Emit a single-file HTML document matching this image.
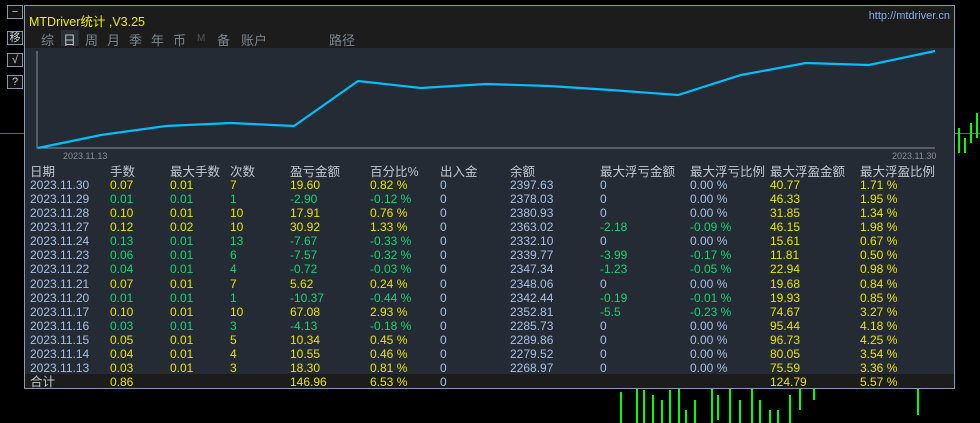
<!DOCTYPE html>
<html><head><meta charset="utf-8"><style>
*{margin:0;padding:0;box-sizing:border-box}
body{width:980px;height:423px;background:#000;position:relative;overflow:hidden;font-family:"Liberation Sans","Noto Sans CJK SC",sans-serif;font-size:12px}
.a{position:absolute;white-space:nowrap}
.btn{position:absolute;left:7px;width:16px;height:14px;border:1px solid #8a9aaa;color:#c8d0d8;font-size:11px;line-height:12px;text-align:center;background:#111}
#panel{position:absolute;left:24px;top:5px;width:931px;height:384px;background:#252b34;border:1px solid #8a9ab0}
#hdr{position:absolute;left:0;top:0;width:929px;height:42px;background:#1c1c1c}
.t{position:absolute;color:#7c858e;font-size:13px;top:24px}
.row{position:absolute;left:0;width:929px;height:14px;line-height:14px}
.row span{position:absolute;top:0}
.y{color:#e6e600}.g{color:#18d470}.d{color:#a8c0e6}.z{color:#a8c0e6}.h{color:#c2c8d0;font-size:12.5px}
</style></head><body>
<div class="btn" style="top:5px">−</div>
<div class="btn" style="top:31px">移</div>
<div class="btn" style="top:53px">√</div>
<div class="btn" style="top:75px">?</div>
<div class="a" style="left:0;top:133px;width:24px;height:1px;background:#667"></div>
<div class="a" style="left:955px;top:133px;width:25px;height:1px;background:#667"></div>
<svg class="a" style="left:600px;top:385px" width="380" height="38">
<g stroke="#00ff00" fill="none" stroke-width="2">
<path d="M21 7V38M37 0V38M44 5V38M53 10V38M62 15V38M70 5V38M79 0V38M86 25V38M95 15V38M112 0V38M118 10V35M130 0V38M140 15V38M152 0V38M160 15V38M170 25V38M178 25V38M190 10V38M200 0V25M214 0V15M318 0V30"/>
</g></svg>
<svg class="a" style="left:955px;top:108px" width="25" height="45"><g stroke="#00ff00" fill="none" stroke-width="2"><path d="M4 20V45M10 30V45M16 15V35M22 5V30"/></g></svg>
<div id="panel">
<div id="hdr"></div>
<div class="a" style="left:4px;top:5px;color:#f0f000;font-size:12.5px">MTDriver统计 ,V3.25</div>
<div class="a" style="right:4px;top:4px;color:#88b0e8;font-size:11px">http://mtdriver.cn</div>
<div class="a" style="left:36px;top:24px;width:18px;height:16px;background:#2a3038"></div>
<span class="t" style="left:16px">综</span><span class="t" style="left:38px;color:#b8c0c8">日</span><span class="t" style="left:60px">周</span><span class="t" style="left:82px">月</span><span class="t" style="left:104px">季</span><span class="t" style="left:126px">年</span><span class="t" style="left:148px">币</span><span class="t" style="left:172px;font-size:10px;top:27px;color:#555">M</span><span class="t" style="left:192px">备</span><span class="t" style="left:216px">账户</span><span class="t" style="left:304px">路径</span>
<svg class="a" style="left:0;top:42px" width="929" height="115">
<path d="M12 3V100H910" stroke="#8a9098" fill="none"/>
<path d="M13 100L76 87L141 78L206 75L269 78L333 33L396 40L461 36L524 38L586 42L653 47L716 27L781 15L844 17L910 3" stroke="#00bfff" stroke-width="2.2" fill="none"/>
</svg>
<div class="a" style="left:38px;top:145px;color:#8a9098;font-size:9px">2023.11.13</div>
<div class="a" style="left:867px;top:145px;color:#8a9098;font-size:9px">2023.11.30</div>
<div class="row" style="top:159px"><span class="h" style="left:5px">日期</span><span class="h" style="left:85px">手数</span><span class="h" style="left:145px">最大手数</span><span class="h" style="left:205px">次数</span><span class="h" style="left:265px">盈亏金额</span><span class="h" style="left:345px">百分比%</span><span class="h" style="left:415px">出入金</span><span class="h" style="left:485px">余额</span><span class="h" style="left:575px">最大浮亏金额</span><span class="h" style="left:665px">最大浮亏比例</span><span class="h" style="left:745px">最大浮盈金额</span><span class="h" style="left:835px">最大浮盈比例</span></div>
<div id="rows"></div>
<div class="a" style="left:0;top:368px;width:929px;height:14px;background:#1c1c1c"></div>
<div class="row" style="top:369px"><span class="h" style="left:5px">合计</span><span class="y" style="left:85px">0.86</span><span class="y" style="left:265px">146.96</span><span class="y" style="left:345px">6.53 %</span><span class="z" style="left:415px">0</span><span class="y" style="left:745px">124.79</span><span class="y" style="left:835px">5.57 %</span></div>
</div>
<script>
var d=[["30","0.07","0.01","7","19.60","0.82 %","2397.63","0","0.00 %","40.77","1.71 %"],
["29","0.01","0.01","1","-2.90","-0.12 %","2378.03","0","0.00 %","46.33","1.95 %"],
["28","0.10","0.01","10","17.91","0.76 %","2380.93","0","0.00 %","31.85","1.34 %"],
["27","0.12","0.02","10","30.92","1.33 %","2363.02","-2.18","-0.09 %","46.15","1.98 %"],
["24","0.13","0.01","13","-7.67","-0.33 %","2332.10","0","0.00 %","15.61","0.67 %"],
["23","0.06","0.01","6","-7.57","-0.32 %","2339.77","-3.99","-0.17 %","11.81","0.50 %"],
["22","0.04","0.01","4","-0.72","-0.03 %","2347.34","-1.23","-0.05 %","22.94","0.98 %"],
["21","0.07","0.01","7","5.62","0.24 %","2348.06","0","0.00 %","19.68","0.84 %"],
["20","0.01","0.01","1","-10.37","-0.44 %","2342.44","-0.19","-0.01 %","19.93","0.85 %"],
["17","0.10","0.01","10","67.08","2.93 %","2352.81","-5.5","-0.23 %","74.67","3.27 %"],
["16","0.03","0.01","3","-4.13","-0.18 %","2285.73","0","0.00 %","95.44","4.18 %"],
["15","0.05","0.01","5","10.34","0.45 %","2289.86","0","0.00 %","96.73","4.25 %"],
["14","0.04","0.01","4","10.55","0.46 %","2279.52","0","0.00 %","80.05","3.54 %"],
["13","0.03","0.01","3","18.30","0.81 %","2268.97","0","0.00 %","75.59","3.36 %"]];
var h="";d.forEach(function(r,i){var c=r[4][0]=="-"?"g":"y",f=r[7]=="0"?"z":"g";
h+='<div class="row" style="top:'+Math.round(172+i*14.08)+'px"><span class="d" style="left:5px">2023.11.'+r[0]+'</span><span class="'+c+'" style="left:85px">'+r[1]+'</span><span class="'+c+'" style="left:145px">'+r[2]+'</span><span class="'+c+'" style="left:205px">'+r[3]+'</span><span class="'+c+'" style="left:265px">'+r[4]+'</span><span class="'+c+'" style="left:345px">'+r[5]+'</span><span class="z" style="left:415px">0</span><span class="z" style="left:485px">'+r[6]+'</span><span class="'+f+'" style="left:575px">'+r[7]+'</span><span class="'+f+'" style="left:665px">'+r[8]+'</span><span class="y" style="left:745px">'+r[9]+'</span><span class="y" style="left:835px">'+r[10]+'</span></div>';});
document.getElementById("rows").innerHTML=h;
</script>
</body></html>
